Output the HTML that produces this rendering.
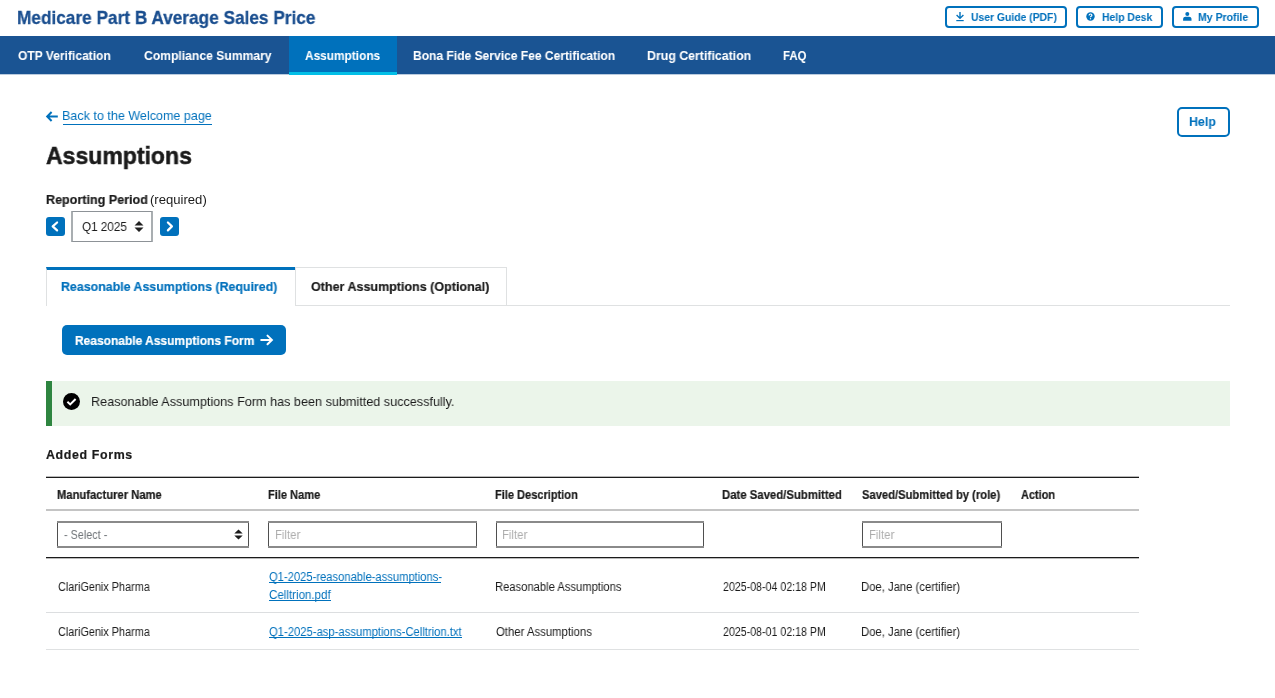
<!DOCTYPE html>
<html><head><meta charset="utf-8"><title>Assumptions</title>
<style>
html,body{margin:0;padding:0;background:#fff;}
body{width:1275px;height:698px;position:relative;overflow:hidden;font-family:"Liberation Sans",sans-serif;}
.t{position:absolute;white-space:nowrap;transform-origin:0 0;will-change:transform;}
.t[style*="font-weight:700"]{-webkit-text-stroke:0.2px currentColor;}
.t.ns{-webkit-text-stroke:0.05px currentColor !important;}
.b{position:absolute;box-sizing:border-box;}
svg{position:absolute;overflow:visible;}
</style></head><body>
<div class="t" style="left:17.39px;top:8.0px;font-size:19px;line-height:19px;font-weight:700;letter-spacing:0.0px;color:#1a4e8f;transform:scaleX(0.9067);-webkit-text-stroke:0.3px currentColor;">Medicare Part B Average Sales Price</div>
<div class="b" style="left:945px;top:6px;width:122px;height:22px;border:2px solid #0071bc;border-radius:4px;"></div>
<div class="b" style="left:1076px;top:6px;width:87px;height:22px;border:2px solid #0071bc;border-radius:4px;"></div>
<div class="b" style="left:1172px;top:6px;width:87px;height:22px;border:2px solid #0071bc;border-radius:4px;"></div>
<div class="t" style="left:970.7px;top:12.0px;font-size:11.5px;line-height:11.5px;font-weight:700;letter-spacing:0.0px;color:#0071bc;transform:scaleX(0.9011);-webkit-text-stroke:0.05px currentColor;">User Guide (PDF)</div>
<div class="t" style="left:1101.7px;top:12.0px;font-size:11.5px;line-height:11.5px;font-weight:700;letter-spacing:0.0px;color:#0071bc;transform:scaleX(0.9036);-webkit-text-stroke:0.05px currentColor;">Help Desk</div>
<div class="t" style="left:1197.8px;top:12.0px;font-size:11.5px;line-height:11.5px;font-weight:700;letter-spacing:0.0px;color:#0071bc;transform:scaleX(0.9145);-webkit-text-stroke:0.05px currentColor;">My Profile</div>
<svg style="left:955.5px;top:12px" width="8" height="9.2" viewBox="0 0 8 9.2"><path d="M4 0V6.6 M0.6 3.1L4 6.4L7.4 3.1" stroke="#0071bc" stroke-width="1.4" fill="none"/><rect x="0.3" y="8" width="7.4" height="1.2" fill="#0071bc"/></svg>
<svg style="left:1086.3px;top:12.1px" width="9" height="9" viewBox="0 0 9 9"><circle cx="4.5" cy="4.5" r="4.2" fill="#0071bc"/><path d="M3.1 3.5 Q3.1 2 4.5 2 Q5.9 2 5.9 3.3 Q5.9 4.1 4.9 4.5 Q4.5 4.7 4.5 5.3" stroke="#fff" stroke-width="1.2" fill="none"/><circle cx="4.5" cy="6.8" r="0.7" fill="#fff"/></svg>
<svg style="left:1182.5px;top:12.3px" width="9" height="9" viewBox="0 0 9 9"><circle cx="4.3" cy="2.0" r="2.0" fill="#0071bc"/><path d="M0.1 8.7 L0.1 6.8 Q0.3 4.8 2.4 4.7 L6.2 4.7 Q8.3 4.8 8.5 6.8 L8.5 8.7 Z" fill="#0071bc"/></svg>
<div class="b" style="left:0px;top:36px;width:1275px;height:38px;background:#1a5493;"></div>
<div class="b" style="left:0px;top:74px;width:1275px;height:1px;background:rgba(26,84,147,0.3);"></div>
<div class="b" style="left:289px;top:36px;width:108px;height:39px;background:#0071bc;border-bottom:3px solid #02bfe7;"></div>
<div class="t" style="left:17.7px;top:49.0px;font-size:13px;line-height:13px;font-weight:700;letter-spacing:0.0px;color:#fff;transform:scaleX(0.926);-webkit-text-stroke:0.05px currentColor;">OTP Verification</div>
<div class="t" style="left:144.0px;top:49.0px;font-size:13px;line-height:13px;font-weight:700;letter-spacing:0.0px;color:#fff;transform:scaleX(0.9343);-webkit-text-stroke:0.05px currentColor;">Compliance Summary</div>
<div class="t" style="left:305.3px;top:49.0px;font-size:13px;line-height:13px;font-weight:700;letter-spacing:0.0px;color:#fff;transform:scaleX(0.9134);-webkit-text-stroke:0.05px currentColor;">Assumptions</div>
<div class="t" style="left:412.57px;top:49.0px;font-size:13px;line-height:13px;font-weight:700;letter-spacing:0.0px;color:#fff;transform:scaleX(0.9267);-webkit-text-stroke:0.05px currentColor;">Bona Fide Service Fee Certification</div>
<div class="t" style="left:647.05px;top:49.0px;font-size:13px;line-height:13px;font-weight:700;letter-spacing:0.0px;color:#fff;transform:scaleX(0.9491);-webkit-text-stroke:0.05px currentColor;">Drug Certification</div>
<div class="t" style="left:783.32px;top:49.0px;font-size:13px;line-height:13px;font-weight:700;letter-spacing:0.0px;color:#fff;transform:scaleX(0.88);-webkit-text-stroke:0.05px currentColor;">FAQ</div>
<svg style="left:45.5px;top:110.9px" width="12" height="11" viewBox="0 0 12 11"><path d="M5.6 1 L1.2 5.5 L5.6 10 M1.4 5.5 H11.8" stroke="#0071bc" stroke-width="2" fill="none"/></svg>
<div class="t" style="left:62.36px;top:109.0px;font-size:13.3px;line-height:13.3px;font-weight:400;letter-spacing:0.0px;color:#0071bc;transform:scaleX(0.9439);">Back to the Welcome page</div>
<div class="b" style="left:63px;top:124px;width:149px;height:1px;background:#0071bc;"></div>
<div class="b" style="left:1177px;top:107px;width:53px;height:30px;border:2px solid #0071bc;border-radius:5px;"></div>
<div class="t" style="left:1189.37px;top:115.0px;font-size:13.3px;line-height:13.3px;font-weight:700;letter-spacing:0.0px;color:#0071bc;transform:scaleX(0.9321);-webkit-text-stroke:0.05px currentColor;">Help</div>
<div class="t" style="left:45.9px;top:144.0px;font-size:24px;line-height:24px;font-weight:700;letter-spacing:0.0px;color:#1b1b1b;transform:scaleX(0.9596);-webkit-text-stroke:0.5px currentColor;">Assumptions</div>
<div class="t" style="left:45.83px;top:193.0px;font-size:13px;line-height:13px;font-weight:700;letter-spacing:0.0px;color:#1b1b1b;transform:scaleX(0.9663);">Reporting Period</div>
<div class="t" style="left:150.49px;top:193.0px;font-size:13px;line-height:13px;font-weight:400;letter-spacing:0.0px;color:#1b1b1b;transform:scaleX(1.0073);">(required)</div>
<div class="b" style="left:46px;top:217px;width:19px;height:19px;background:#0071bc;border-radius:3px;"></div>
<div class="b" style="left:160px;top:217px;width:19px;height:19px;background:#0071bc;border-radius:3px;"></div>
<svg style="left:46px;top:217px" width="19" height="19" viewBox="0 0 19 19"><path d="M11.1 5.5 L6.7 9.4 L11.1 13.4" stroke="#fff" stroke-width="2.2" stroke-linecap="round" stroke-linejoin="round" fill="none"/></svg>
<svg style="left:160px;top:217px" width="19" height="19" viewBox="0 0 19 19"><path d="M7.9 5.5 L11.9 9.4 L7.9 13.4" stroke="#fff" stroke-width="2.2" stroke-linecap="round" stroke-linejoin="round" fill="none"/></svg>
<div class="b" style="left:71px;top:211px;width:82px;height:31px;border-top:1px solid #8d9297;border-bottom:1px solid #8d9297;border-left:2px solid #a9aeb1;border-right:2px solid #a9aeb1;border-radius:1px;"></div>
<div class="t" style="left:81.6px;top:220.0px;font-size:13.4px;line-height:13.4px;font-weight:400;letter-spacing:0.0px;color:#1b1b1b;transform:scaleX(0.8725);">Q1 2025</div>
<svg style="left:134px;top:221px" width="10" height="11" viewBox="0 0 10 11"><path d="M0.5 4.5 L5 0 L9.5 4.5Z M0.5 6.5 L5 11 L9.5 6.5Z" fill="#212121"/></svg>
<div class="b" style="left:46px;top:305px;width:1184px;height:1px;background:#dfe1e2;"></div>
<div class="b" style="left:46px;top:267px;width:249px;height:39px;background:#fff;border-left:1px solid #dfe1e2;border-top:3px solid #0071bc;"></div>
<div class="b" style="left:295px;top:267px;width:212px;height:39px;background:#fff;border:1px solid #dfe1e2;"></div>
<div class="t" style="left:61.47px;top:280.0px;font-size:13.3px;line-height:13.3px;font-weight:700;letter-spacing:0.0px;color:#0071bc;transform:scaleX(0.9316);">Reasonable Assumptions (Required)</div>
<div class="t" style="left:311.0px;top:280.0px;font-size:13.3px;line-height:13.3px;font-weight:700;letter-spacing:0.0px;color:#1b1b1b;transform:scaleX(0.9418);">Other Assumptions (Optional)</div>
<div class="b" style="left:62px;top:325px;width:224px;height:30px;background:#0071bc;border-radius:5px;"></div>
<div class="t" style="left:74.6px;top:334.0px;font-size:13.3px;line-height:13.3px;font-weight:700;letter-spacing:0.0px;color:#fff;transform:scaleX(0.901);">Reasonable Assumptions Form</div>
<svg style="left:261px;top:335px" width="12" height="10" viewBox="0 0 12 10"><path d="M6.5 0.6 L10.9 4.9 L6.5 9.3 M0.2 4.9 H10.6" stroke="#fff" stroke-width="2" stroke-linecap="round" fill="none"/></svg>
<div class="b" style="left:46px;top:381px;width:1184px;height:45px;background:#ebf5ea;border-left:6px solid #2e8540;"></div>
<svg style="left:63px;top:393px" width="17" height="17" viewBox="0 0 17 17"><circle cx="8.5" cy="8.5" r="8.5" fill="#000"/><path d="M4.4 8.8 L7.2 11.4 L12.6 6" stroke="#fff" stroke-width="2" fill="none"/></svg>
<div class="t" style="left:90.67px;top:395.0px;font-size:13.6px;line-height:13.6px;font-weight:400;letter-spacing:0.0px;color:#1b1b1b;transform:scaleX(0.9293);">Reasonable Assumptions Form has been submitted successfully.</div>
<div class="t" style="left:46.0px;top:449.0px;font-size:12.4px;line-height:12.4px;font-weight:700;letter-spacing:0.64px;color:#1b1b1b;">Added Forms</div>
<div class="b" style="left:46px;top:476px;width:1093px;height:1px;background:rgba(27,27,27,0.3);"></div>
<div class="b" style="left:46px;top:477px;width:1093px;height:1px;background:#1b1b1b;"></div>
<div class="t" style="left:56.99px;top:489.0px;font-size:12.4px;line-height:12.4px;font-weight:700;letter-spacing:0.0px;color:#1b1b1b;transform:scaleX(0.9052);">Manufacturer Name</div>
<div class="t" style="left:267.91px;top:489.0px;font-size:12.4px;line-height:12.4px;font-weight:700;letter-spacing:0.0px;color:#1b1b1b;transform:scaleX(0.8914);">File Name</div>
<div class="t" style="left:495.11px;top:489.0px;font-size:12.4px;line-height:12.4px;font-weight:700;letter-spacing:0.0px;color:#1b1b1b;transform:scaleX(0.8902);">File Description</div>
<div class="t" style="left:722.08px;top:489.0px;font-size:12.4px;line-height:12.4px;font-weight:700;letter-spacing:0.0px;color:#1b1b1b;transform:scaleX(0.9163);">Date Saved/Submitted</div>
<div class="t" style="left:862.4px;top:489.0px;font-size:12.4px;line-height:12.4px;font-weight:700;letter-spacing:0.0px;color:#1b1b1b;transform:scaleX(0.9039);">Saved/Submitted by (role)</div>
<div class="t" style="left:1021.2px;top:489.0px;font-size:12.4px;line-height:12.4px;font-weight:700;letter-spacing:0.0px;color:#1b1b1b;transform:scaleX(0.8816);">Action</div>
<div class="b" style="left:46px;top:509px;width:1093px;height:2px;background:#c4c4c4;"></div>
<div class="b" style="left:57px;top:521px;width:192px;height:27px;border-left:1px solid #4f4f4f;border-right:1px solid #4f4f4f;"></div>
<div class="b" style="left:57px;top:521px;width:192px;height:2px;background:#8a8a8a;"></div>
<div class="b" style="left:57px;top:546px;width:192px;height:2px;background:#8a8a8a;"></div>
<div class="b" style="left:268px;top:521px;width:209px;height:27px;border-left:1px solid #4f4f4f;border-right:1px solid #4f4f4f;"></div>
<div class="b" style="left:268px;top:521px;width:209px;height:2px;background:#8a8a8a;"></div>
<div class="b" style="left:268px;top:546px;width:209px;height:2px;background:#8a8a8a;"></div>
<div class="b" style="left:496px;top:521px;width:208px;height:27px;border-left:1px solid #4f4f4f;border-right:1px solid #4f4f4f;"></div>
<div class="b" style="left:496px;top:521px;width:208px;height:2px;background:#8a8a8a;"></div>
<div class="b" style="left:496px;top:546px;width:208px;height:2px;background:#8a8a8a;"></div>
<div class="b" style="left:862px;top:521px;width:140px;height:27px;border-left:1px solid #4f4f4f;border-right:1px solid #4f4f4f;"></div>
<div class="b" style="left:862px;top:521px;width:140px;height:2px;background:#8a8a8a;"></div>
<div class="b" style="left:862px;top:546px;width:140px;height:2px;background:#8a8a8a;"></div>
<div class="t" style="left:63.6px;top:529.0px;font-size:12.4px;line-height:12.4px;font-weight:400;letter-spacing:0.0px;color:#71767a;transform:scaleX(0.8735);">- Select -</div>
<div class="t" style="left:274.78px;top:529.0px;font-size:12.4px;line-height:12.4px;font-weight:400;letter-spacing:0.0px;color:#adadad;transform:scaleX(0.9185);">Filter</div>
<div class="t" style="left:502.38px;top:529.0px;font-size:12.4px;line-height:12.4px;font-weight:400;letter-spacing:0.0px;color:#adadad;transform:scaleX(0.9185);">Filter</div>
<div class="t" style="left:868.68px;top:529.0px;font-size:12.4px;line-height:12.4px;font-weight:400;letter-spacing:0.0px;color:#adadad;transform:scaleX(0.9185);">Filter</div>
<svg style="left:234px;top:529px" width="9" height="11" viewBox="0 0 9 11"><path d="M0.3 4.6 L4.5 0.4 L8.7 4.6Z M0.3 6.4 L4.5 10.6 L8.7 6.4Z" fill="#1b1b1b"/></svg>
<div class="b" style="left:46px;top:557px;width:1093px;height:1px;background:#1b1b1b;"></div>
<div class="b" style="left:46px;top:558px;width:1093px;height:1px;background:rgba(27,27,27,0.3);"></div>
<div class="t" style="left:57.6px;top:581.0px;font-size:12px;line-height:12px;font-weight:400;letter-spacing:0.0px;color:#1b1b1b;transform:scaleX(0.9059);">ClariGenix Pharma</div>
<div class="t" style="left:268.6px;top:571.0px;font-size:12px;line-height:12px;font-weight:400;letter-spacing:0.0px;color:#0071bc;transform:scaleX(0.933);">Q1-2025-reasonable-assumptions-</div>
<div class="t" style="left:268.6px;top:589.0px;font-size:12px;line-height:12px;font-weight:400;letter-spacing:0.0px;color:#0071bc;transform:scaleX(0.9631);">Celltrion.pdf</div>
<div class="t" style="left:494.97px;top:581.0px;font-size:12px;line-height:12px;font-weight:400;letter-spacing:0.0px;color:#1b1b1b;transform:scaleX(0.9336);">Reasonable Assumptions</div>
<div class="t" style="left:722.5px;top:581.0px;font-size:12px;line-height:12px;font-weight:400;letter-spacing:0.0px;color:#1b1b1b;transform:scaleX(0.8861);">2025-08-04 02:18 PM</div>
<div class="t" style="left:861.26px;top:581.0px;font-size:12px;line-height:12px;font-weight:400;letter-spacing:0.0px;color:#1b1b1b;transform:scaleX(0.9404);">Doe, Jane (certifier)</div>
<div class="t" style="left:57.6px;top:626.0px;font-size:12px;line-height:12px;font-weight:400;letter-spacing:0.0px;color:#1b1b1b;transform:scaleX(0.9059);">ClariGenix Pharma</div>
<div class="t" style="left:268.6px;top:626.0px;font-size:12px;line-height:12px;font-weight:400;letter-spacing:0.0px;color:#0071bc;transform:scaleX(0.9379);">Q1-2025-asp-assumptions-Celltrion.txt</div>
<div class="t" style="left:495.9px;top:626.0px;font-size:12px;line-height:12px;font-weight:400;letter-spacing:0.0px;color:#1b1b1b;transform:scaleX(0.9455);">Other Assumptions</div>
<div class="t" style="left:722.5px;top:626.0px;font-size:12px;line-height:12px;font-weight:400;letter-spacing:0.0px;color:#1b1b1b;transform:scaleX(0.8861);">2025-08-01 02:18 PM</div>
<div class="t" style="left:861.26px;top:626.0px;font-size:12px;line-height:12px;font-weight:400;letter-spacing:0.0px;color:#1b1b1b;transform:scaleX(0.9404);">Doe, Jane (certifier)</div>
<div class="b" style="left:268.6px;top:582px;width:172.59999999999997px;height:1px;background:#0071bc;"></div>
<div class="b" style="left:268.6px;top:600px;width:62.599999999999966px;height:1px;background:#0071bc;"></div>
<div class="b" style="left:268.6px;top:637px;width:193.2px;height:1px;background:#0071bc;"></div>
<div class="b" style="left:46px;top:612px;width:1093px;height:1px;background:#dcdee0;"></div>
<div class="b" style="left:46px;top:649px;width:1093px;height:1px;background:#dfe1e2;"></div>
</body></html>
